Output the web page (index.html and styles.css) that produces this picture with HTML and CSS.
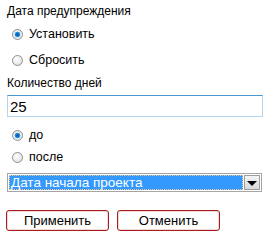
FILE: index.html
```html
<!DOCTYPE html>
<html lang="ru">

<head>
    <meta charset="UTF-8">
    <title>Дата предупреждения</title>
    <link rel="stylesheet" href="styles.css">
</head>

<body>
    <form class="warning-form">
        <div class="field-label">Дата предупреждения</div>
        <label class="radio-row">
            <input type="radio" name="mode" checked>
            <span>Установить</span>
        </label>
        <label class="radio-row">
            <input type="radio" name="mode">
            <span>Сбросить</span>
        </label>

        <div class="field-label days-label">Количество дней</div>
        <input class="days-input" type="text" value="25">

        <label class="radio-row first-dir">
            <input type="radio" name="dir" checked>
            <span>до</span>
        </label>
        <label class="radio-row second-dir">
            <input type="radio" name="dir">
            <span>после</span>
        </label>

        <div class="select-box">
            <span class="select-value">Дата начала проекта</span>
            <span class="select-arrow"></span>
        </div>

        <div class="actions">
            <button type="button" class="btn">Применить</button>
            <button type="button" class="btn">Отменить</button>
        </div>
    </form>
</body>

</html>
```

FILE: styles.css
```css
body {
    margin: 0;
    padding: 0;
    background: #fff;
    font-family: "Liberation Sans", Arial, sans-serif;
    font-size: 12px;
    color: #000;
}

.warning-form {
    display: flex;
    flex-direction: column;
    padding: 4px 7px 0 7px;
}

.field-label {
    line-height: 15px;
}

.radio-row {
    display: flex;
    align-items: center;
    height: 16px;
    margin-top: 7px;
    padding-left: 5px;
}

.radio-row + .radio-row {
    margin-top: 10px;
}

.radio-row span {
    margin-left: 6px;
    font-size: 12.5px;
}

.radio-row input {
    appearance: none;
    -webkit-appearance: none;
    width: 11px;
    height: 11px;
    margin: 0;
    border: 1px solid #8e8f8f;
    border-radius: 50%;
    background: radial-gradient(circle at 40% 35%, #fff 0%, #ececec 55%, #d6d6d6 100%);
    box-sizing: border-box;
}

.radio-row input:checked {
    background: radial-gradient(circle at 50% 50%, #0b4f91 0%, #1683d8 30%, #4aa8ea 42%, #f2f2f2 50%, #dcdcdc 100%);
}

.days-label {
    margin-top: 8px;
}

.days-input {
    margin-top: 4px;
    width: 256px;
    height: 22px;
    box-sizing: border-box;
    border: 1px solid #b5d5ee;
    border-top-color: #4b97d0;
    padding: 0 2px;
    font-family: inherit;
    font-size: 15px;
    outline: none;
}

.first-dir {
    margin-top: 10px;
}

.radio-row.second-dir {
    margin-top: 6px;
}

.select-box {
    display: flex;
    margin-top: 8px;
    width: 255px;
    height: 19px;
    box-sizing: border-box;
    border: 1px solid #a5a5a5;
    padding: 1px;
}

.select-value {
    flex: 1;
    background: #3399ff;
    color: #fff;
    font-size: 13.5px;
    line-height: 15px;
    padding-left: 2px;
    outline: 1px dotted #f3c98e;
    outline-offset: -1px;
}

.select-arrow {
    position: relative;
    width: 16px;
    margin-left: 1px;
    border: 1px solid #9e9e9e;
    box-sizing: border-box;
    background: linear-gradient(#f4f4f4, #d8d8d8);
}

.select-arrow::after {
    content: "";
    position: absolute;
    left: 2px;
    top: 5px;
    border-left: 5px solid transparent;
    border-right: 5px solid transparent;
    border-top: 5px solid #000;
}

.actions {
    display: flex;
    gap: 8px;
    margin-top: 18px;
    margin-left: -1px;
}

.btn {
    width: 103px;
    height: 21px;
    border: 1px solid #a81c1c;
    border-radius: 3px;
    background: #fff;
    box-shadow: inset 0 0 0 1px #f1d9d9;
    font-family: inherit;
    font-size: 13px;
    color: #000;
    padding: 0;
}
```
